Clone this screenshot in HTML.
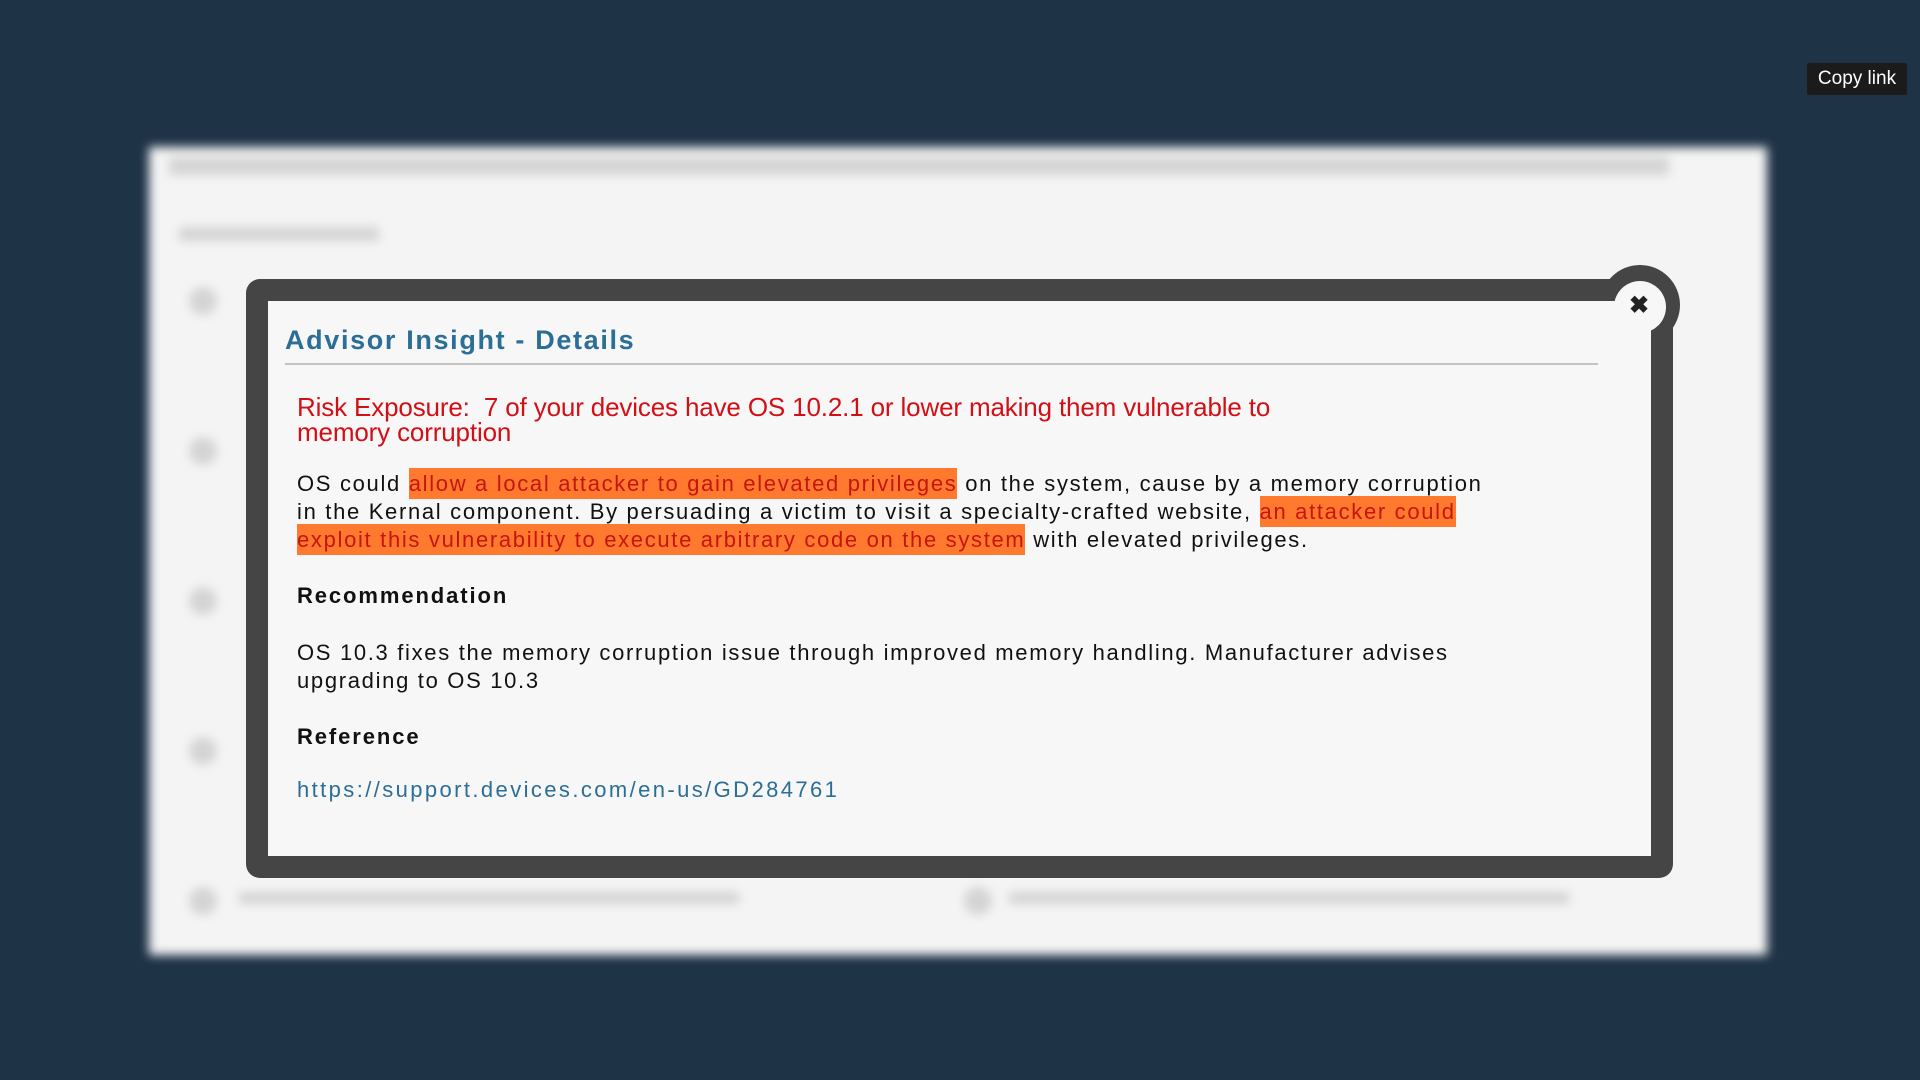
<!DOCTYPE html>
<html><head><meta charset="utf-8"><style>
*{margin:0;padding:0;box-sizing:border-box}
body{width:1920px;height:1080px;background:#1f3347;position:relative;overflow:hidden;font-family:"Liberation Sans",Arial,sans-serif}
.bg{position:absolute;left:149px;top:147px;width:1618px;height:808px;background:#f4f4f4;filter:blur(5px)}
.bg div{position:absolute;background:#d4d4d4}
.copy{position:absolute;left:1807px;top:63px;width:100px;height:32px;background:#1b1b1b;color:#fff;font-size:19px;line-height:32px;text-align:center;border-radius:2px}
.modal{position:absolute;left:246px;top:279px;width:1427px;height:599px;background:#454545;border-radius:14px}
.circ{position:absolute;left:1600px;top:265px;width:80px;height:80px;border-radius:50%;background:#454545}
.inner{position:absolute;left:268px;top:301px;width:1383px;height:555px;background:#f7f7f7}
.cin{position:absolute;left:1614px;top:281px;width:52px;height:52px;border-radius:50%;background:#f7f7f7}
.x{position:absolute;left:1629px;top:291px;font-size:24px;font-weight:bold;color:#222;line-height:30px}
.t{position:absolute;left:285px;top:325px;font-size:27px;font-weight:bold;color:#2b6e96;letter-spacing:1.65px}
.hr{position:absolute;left:285px;top:363px;width:1313px;height:2px;background:#c2c2c2}
.red{position:absolute;left:297px;top:395px;font-size:26px;line-height:25px;color:#d20f16;letter-spacing:-0.15px}
.p{position:absolute;left:297px;font-size:22px;line-height:28px;color:#111;letter-spacing:1.68px;white-space:nowrap}
.h{background:#ff7a2e;color:#c8140f;padding:3px 0}
.b{position:absolute;left:297px;font-size:22px;font-weight:bold;color:#111;letter-spacing:1.9px}
a{color:#2b6e96;text-decoration:none;letter-spacing:2.4px}
</style></head><body>
<div class="bg">
<div style="left:20px;top:10px;width:1500px;height:18px"></div>
<div style="left:30px;top:80px;width:200px;height:14px"></div>
<div style="left:40px;top:140px;width:28px;height:28px;border-radius:50%"></div>
<div style="left:40px;top:290px;width:28px;height:28px;border-radius:50%"></div>
<div style="left:40px;top:440px;width:28px;height:28px;border-radius:50%"></div>
<div style="left:40px;top:590px;width:28px;height:28px;border-radius:50%"></div>
<div style="left:40px;top:740px;width:28px;height:28px;border-radius:50%"></div>
<div style="left:90px;top:745px;width:500px;height:12px"></div>
<div style="left:815px;top:740px;width:28px;height:28px;border-radius:50%"></div>
<div style="left:860px;top:745px;width:560px;height:12px"></div>
</div>
<div class="copy">Copy link</div>
<div class="modal"></div>
<div class="circ"></div>
<div class="inner"></div>
<div class="cin"></div>
<div class="x">✖</div>
<div class="t">Advisor Insight - Details</div>
<div class="hr"></div>
<div class="red">Risk Exposure:&nbsp; 7 of your devices have OS 10.2.1 or lower making them vulnerable to<br>memory corruption</div>
<div class="p" style="top:470px">OS could <span class="h">allow a local attacker to gain elevated privileges</span> on the system, cause by a memory corruption<br>in the Kernal component. By persuading a victim to visit a specialty-crafted website, <span class="h">an attacker could</span><br><span class="h">exploit this vulnerability to execute arbitrary code on the system</span> with elevated privileges.</div>
<div class="b" style="top:583px">Recommendation</div>
<div class="p" style="top:639px">OS 10.3 fixes the memory corruption issue through improved memory handling. Manufacturer advises<br>upgrading to OS 10.3</div>
<div class="b" style="top:724px">Reference</div>
<div class="p" style="top:776px"><a>https://support.devices.com/en-us/GD284761</a></div>
</body></html>
